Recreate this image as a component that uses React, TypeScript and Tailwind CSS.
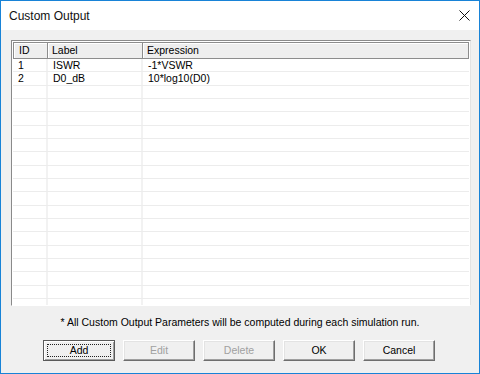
import React from 'react';

const rows = [
  { id: '1', label: 'ISWR', expr: '-1*VSWR' },
  { id: '2', label: 'D0_dB', expr: '10*log10(D0)' },
];

const emptyRows = Array.from({ length: 17 });

const Button = ({ label, disabled, isDefault }: { label: string; disabled?: boolean; isDefault?: boolean }) => {
  if (isDefault) {
    return (
      <div className="w-[72px] h-[21px] border border-[#5a5a5a] bg-[#f0f0f0] shadow-[inset_1px_1px_0_#fff,inset_-1px_-1px_0_#a0a0a0] p-[3px]">
        <div className="h-full border border-dotted border-[#222] flex items-center justify-center text-[#000]">{label}</div>
      </div>
    );
  }
  return (
    <div
      className={`w-[72px] h-[21px] flex items-center justify-center border-t border-l border-t-white border-l-white border-r border-b border-r-[#6e6e6e] border-b-[#6e6e6e] bg-[#f0f0f0] shadow-[inset_-1px_-1px_0_#a0a0a0,inset_1px_1px_0_#e3e3e3] ${
        disabled ? 'text-[#a0a0a0]' : 'text-black'
      }`}
    >
      {label}
    </div>
  );
};

export default function App() {
  return (
    <div
      className="w-[480px] h-[374px] border border-[#1883d7] bg-[#f0f0f0] flex flex-col overflow-hidden text-black"
      style={{ fontFamily: '"Liberation Sans", Arial, sans-serif' }}
    >
      {/* Title bar */}
      <div className="h-[29px] shrink-0 bg-white flex items-center justify-between pl-[8px] pr-[8px]">
        <span className="text-[12px] text-[#111]">Custom Output</span>
        <svg width="11" height="11" viewBox="0 0 11 11" className="mt-[-1px] mr-[1px]">
          <path d="M0.5 0.5 L10.5 10.5 M10.5 0.5 L0.5 10.5" stroke="#111" strokeWidth="1" fill="none" />
        </svg>
      </div>

      {/* Body */}
      <div className="flex-1 flex flex-col pt-[10px] px-[10px]">
        {/* List box */}
        <div className="w-[460px] h-[266px] border-t border-l border-t-[#8a8a8a] border-l-[#8a8a8a] border-b border-r border-b-white border-r-[#e3e3e3] shadow-[inset_1px_1px_0_#4a4a4a]">
          <div className="h-full pl-[1px] pt-[1px] pr-[1px] bg-white flex flex-col overflow-hidden text-[10.5px]">
            {/* Header */}
            <div className="h-[17px] shrink-0 flex bg-[#eeeeee]">
              <div className="w-[35px] border border-[#8c8c8c] shadow-[inset_1px_1px_0_#fff] pl-[5px] flex items-center">ID</div>
              <div className="w-[95px] border border-l-0 border-[#8c8c8c] shadow-[inset_1px_1px_0_#fff] pl-[4px] flex items-center">Label</div>
              <div className="w-[326px] border border-l-0 border-[#8c8c8c] shadow-[inset_1px_1px_0_#fff] pl-[4px] flex items-center">Expression</div>
            </div>
            {/* Rows */}
            {rows.map((r) => (
              <div key={r.id} className="h-[13.33px] shrink-0 flex border-b border-[#ececec]">
                <div className="w-[35px] border-r-2 border-[#f2f2f2] pl-[5px] leading-[13px]">{r.id}</div>
                <div className="w-[95px] border-r-2 border-[#f2f2f2] pl-[5px] leading-[13px]">{r.label}</div>
                <div className="flex-1 pl-[5px] leading-[13px]">{r.expr}</div>
              </div>
            ))}
            {emptyRows.map((_, i) => (
              <div key={i} className="h-[13.33px] shrink-0 flex border-b border-[#ececec]">
                <div className="w-[35px] border-r-2 border-[#f2f2f2]" />
                <div className="w-[95px] border-r-2 border-[#f2f2f2]" />
                <div className="flex-1" />
              </div>
            ))}
          </div>
        </div>

        {/* Note */}
        <div className="mt-[9px] h-[14px] text-[10.5px] text-center">
          * All Custom Output Parameters will be computed during each simulation run.
        </div>

        {/* Buttons */}
        <div className="mt-[11px] flex gap-[8px] pl-[32px] text-[10.5px]">
          <Button label="Add" isDefault />
          <Button label="Edit" disabled />
          <Button label="Delete" disabled />
          <Button label="OK" />
          <Button label="Cancel" />
        </div>
      </div>
    </div>
  );
}
